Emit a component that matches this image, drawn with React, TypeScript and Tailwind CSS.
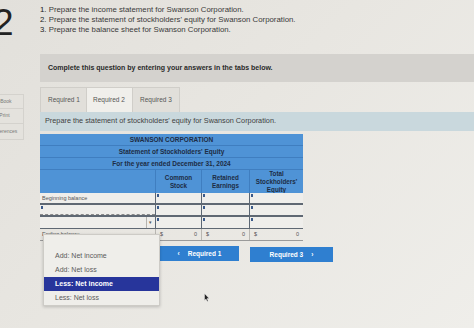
import React from "react";

const font = { fontFamily: '"Liberation Sans", Arial, sans-serif' };

function Marker() {
  return <div className="absolute left-[1px] top-[1px] w-[2px] h-[3px] bg-[#3b5a8a]" />;
}

function InputCell({ w }: { w: string }) {
  return (
    <div className={`relative ${w} h-full border-l border-[#5c6774] bg-[#efeeeb] border-r-0`}>
      <Marker />
    </div>
  );
}

export default function App() {
  return (
    <div
      style={font}
      className="relative w-[474px] h-[328px] overflow-hidden bg-[linear-gradient(135deg,#e2e0db_0%,#e8e6e1_45%,#efeeea_100%)] flex"
    >
      {/* left column */}
      <div className="w-[40px] shrink-0 flex flex-col">
        <div className="ml-[-7px] mt-[3px] h-[40px] text-[37px] leading-[40px] text-[#222] font-light">2</div>
        <div className="mt-[51px] ml-[-14px] w-[38px] flex flex-col text-[5px] text-[#7a7a78]">
          <div className="h-[15px] border-y border-r border-[#d4d2cd] bg-[#e4e2dd] flex items-center justify-center">eBook</div>
          <div className="h-[15px] border-b border-r border-[#d4d2cd] bg-[#e4e2dd] flex items-center justify-center">Print</div>
          <div className="h-[16px] border-b border-r border-[#d4d2cd] bg-[#e4e2dd] flex items-center justify-center">References</div>
        </div>
      </div>

      {/* main column */}
      <div className="flex-1 flex flex-col">
        <div className="pt-[5px] text-[7.8px] leading-[10px] text-[#3a3a3a]">
          <div><span className="text-[#222]">1.</span> Prepare the income statement for Swanson Corporation.</div>
          <div><span className="text-[#222]">2.</span> Prepare the statement of stockholders' equity for Swanson Corporation.</div>
          <div><span className="text-[#222]">3.</span> Prepare the balance sheet for Swanson Corporation.</div>
        </div>

        <div className="mt-[19px] h-[28px] bg-[#d4d2ce] flex items-center pl-[8px] text-[7px] font-bold text-[#2a2a2a]">
          Complete this question by entering your answers in the tabs below.
        </div>

        <div className="mt-[5px] h-[25px] flex text-[6.5px] text-[#555]">
          <div className="w-[47px] h-full bg-[#e1dfda] border border-b-0 border-[#d0cec9] flex items-center pl-[7px]">Required 1</div>
          <div className="w-[45px] h-full bg-[#f0efeb] border-t border-[#d0cec9] flex items-center pl-[6px]">Required 2</div>
          <div className="w-[48px] h-full bg-[#e1dfda] border border-b-0 border-[#d0cec9] flex items-center pl-[7px]">Required 3</div>
        </div>

        <div className="h-[19px] bg-[#c9d8dd] flex items-center pl-[5px] text-[7.3px] text-[#3f3f3f]">
          Prepare the statement of stockholders' equity for Swanson Corporation.
        </div>

        {/* table */}
        <div className="mt-[3px] w-[263px] flex flex-col text-[#1d2c44]">
          <div className="h-[12px] bg-[#4f93d6] border-b border-[#3f7ec0] flex items-center justify-center text-[6.5px] font-bold">SWANSON CORPORATION</div>
          <div className="h-[12px] bg-[#4f93d6] border-b border-[#3f7ec0] flex items-center justify-center text-[6.5px] font-bold">Statement of Stockholders' Equity</div>
          <div className="h-[12px] bg-[#4f93d6] border-b border-[#3f7ec0] flex items-center justify-center text-[6.5px] font-bold">For the year ended December 31, 2024</div>
          <div className="h-[23px] bg-[#4f93d6] flex text-[6.3px] font-bold leading-[8px] text-center">
            <div className="w-[115px]" />
            <div className="w-[46px] border-l border-[#3f7ec0] flex items-center justify-center">Common<br />Stock</div>
            <div className="w-[48px] border-l border-[#3f7ec0] flex items-center justify-center">Retained<br />Earnings</div>
            <div className="w-[54px] border-l border-[#3f7ec0] flex items-center justify-center">Total<br />Stockholders'<br />Equity</div>
          </div>

          {/* beginning balance */}
          <div className="h-[12px] flex border-b-2 border-[#5f6873] bg-[#efeeeb]">
            <div className="w-[115px] flex items-center pl-[2px] text-[5.5px] text-[#555]">Beginning balance</div>
            <InputCell w="w-[46px]" />
            <InputCell w="w-[48px]" />
            <InputCell w="w-[54px]" />
          </div>
          {/* blank row */}
          <div className="h-[12px] flex border-b-2 border-[#5f6873] bg-[#efeeeb]">
            <div className="relative w-[115px] border-b border-dashed border-[#8a8a8a]"><Marker /></div>
            <InputCell w="w-[46px]" />
            <InputCell w="w-[48px]" />
            <InputCell w="w-[54px]" />
          </div>
          {/* dropdown row */}
          <div className="h-[12px] flex border-b border-[#5f6873] bg-[#efeeeb]">
            <div className="relative w-[115px] flex items-center justify-end pr-[2px] text-[5px] text-[#555]">
              <div className="h-full w-[7px] border-l border-[#b5b3ae] flex items-center justify-center">▾</div>
            </div>
            <InputCell w="w-[46px]" />
            <InputCell w="w-[48px]" />
            <InputCell w="w-[54px]" />
          </div>
          {/* ending balance */}
          <div className="h-[12px] flex border-b border-[#9a9a9a] text-[5.5px] text-[#555]">
            <div className="w-[115px] flex items-center pl-[2px]">Ending balance</div>
            <div className="w-[46px] border-l border-[#b9b7b2] flex items-center justify-between px-[4px]"><span>$</span><span>0</span></div>
            <div className="w-[48px] border-l border-[#b9b7b2] flex items-center justify-between px-[4px]"><span>$</span><span>0</span></div>
            <div className="w-[54px] border-l border-[#b9b7b2] flex items-center justify-between px-[4px]"><span>$</span><span>0</span></div>
          </div>
        </div>

        {/* nav buttons */}
        <div className="mt-[5px] ml-[120px] flex items-start gap-[11px] text-[6.5px] font-bold text-white">
          <div className="w-[79px] h-[15px] bg-[#2f7fd0] flex items-center justify-center gap-[8px]">
            <span>‹</span><span>Required 1</span>
          </div>
          <div className="mt-[1px] w-[83px] h-[15px] bg-[#2f7fd0] flex items-center justify-center gap-[8px]">
            <span>Required 3</span><span>›</span>
          </div>
        </div>
      </div>

      {/* dropdown list overlay */}
      <div className="absolute left-[43px] top-[234px] w-[117px] bg-[#efeeea] border border-[#cdcbc6] shadow-[0_1px_3px_rgba(0,0,0,0.2)] flex flex-col text-[7px] text-[#5a5a5a]">
        <div className="h-[14px]" />
        <div className="h-[14px] flex items-center pl-[11px]">Add: Net income</div>
        <div className="h-[14px] flex items-center pl-[11px]">Add: Net loss</div>
        <div className="h-[14px] flex items-center pl-[11px] bg-[#27359b] text-white font-bold">Less: Net income</div>
        <div className="h-[14px] flex items-center pl-[11px]">Less: Net loss</div>
      </div>

      {/* mouse cursor */}
      <svg className="absolute left-[204px] top-[293px]" width="6" height="9" viewBox="0 0 6 9">
        <path d="M0.5 0.5 L0.5 7.5 L2 6 L3.2 8.5 L4.2 8 L3 5.6 L5.2 5.6 Z" fill="#222" stroke="#fff" strokeWidth="0.4" />
      </svg>
    </div>
  );
}
